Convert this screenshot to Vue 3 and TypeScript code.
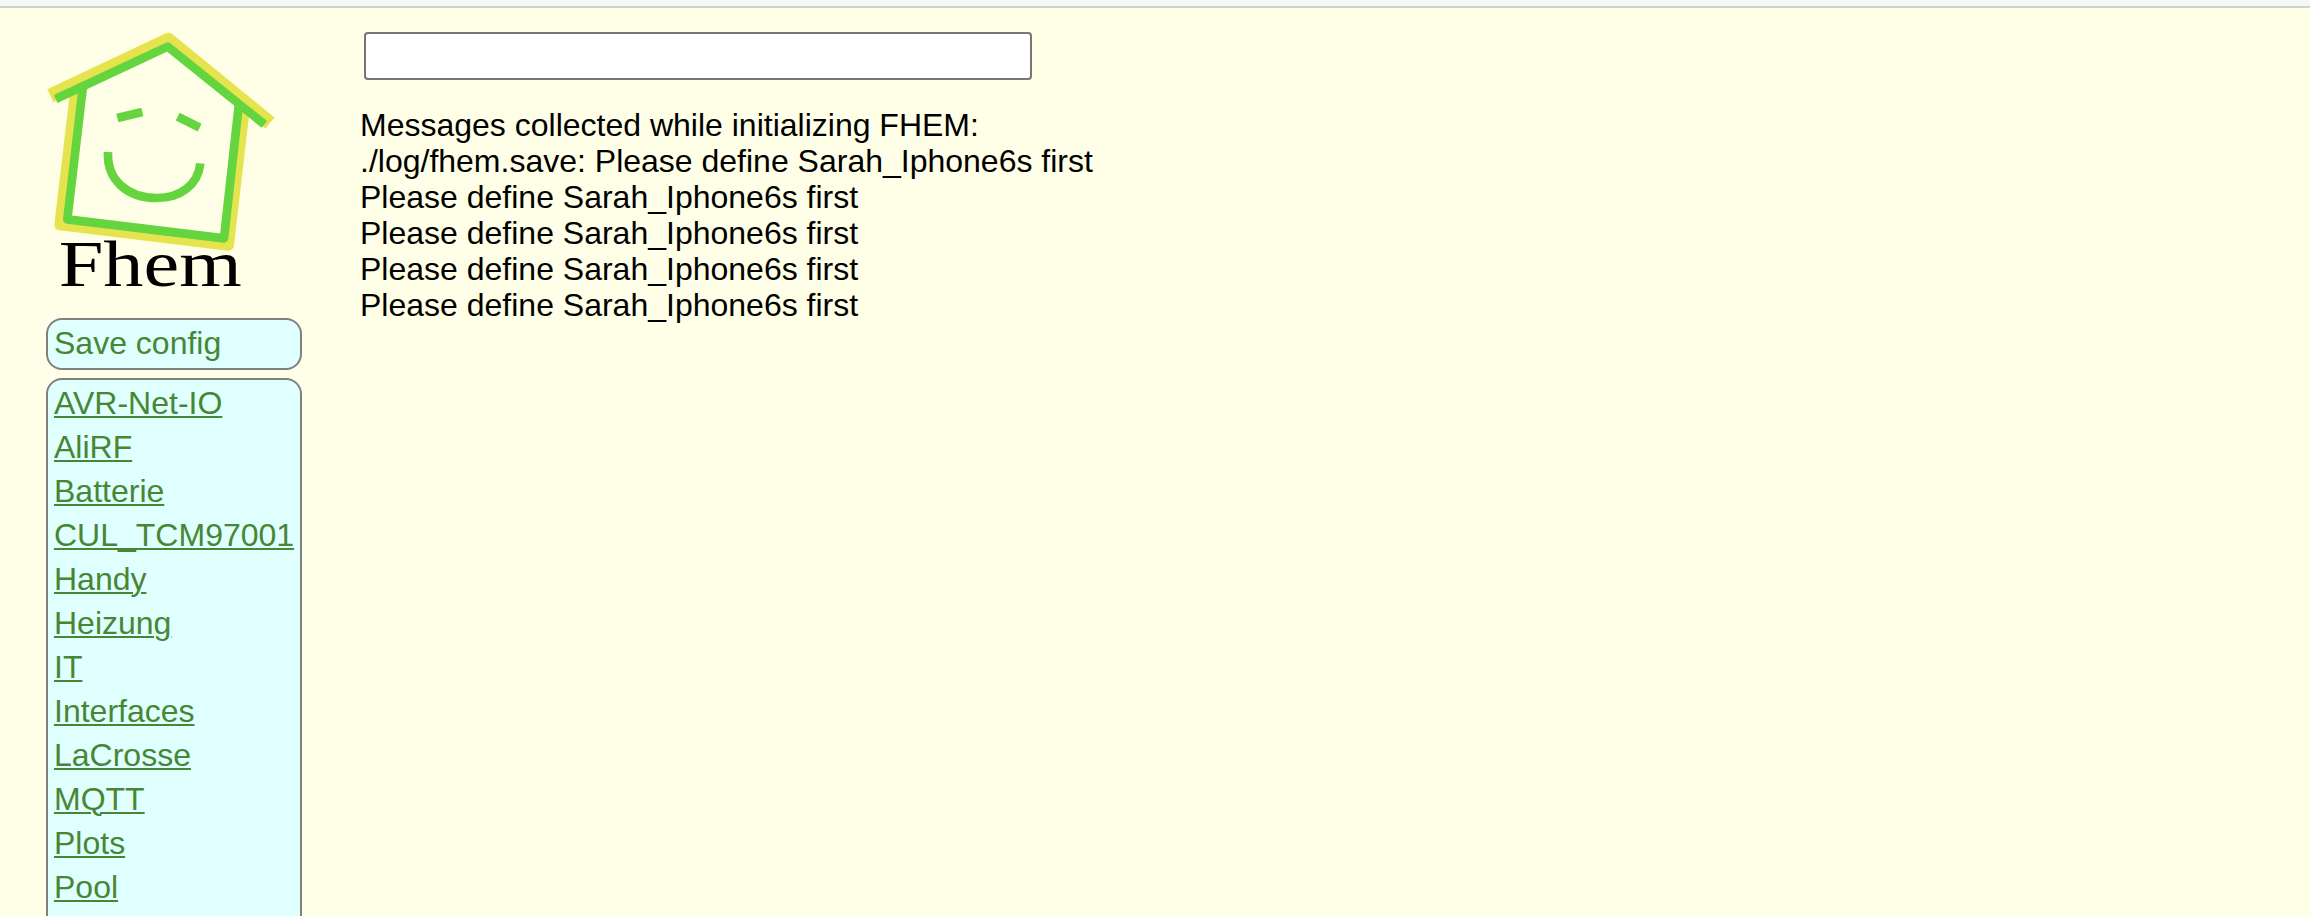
<script setup lang="ts">
import { ref } from 'vue'

const command = ref<string>('')

const rooms: string[] = [
  'AVR-Net-IO',
  'AliRF',
  'Batterie',
  'CUL_TCM97001',
  'Handy',
  'Heizung',
  'IT',
  'Interfaces',
  'LaCrosse',
  'MQTT',
  'Plots',
  'Pool',
]

const messages: string[] = [
  'Messages collected while initializing FHEM:',
  './log/fhem.save: Please define Sarah_Iphone6s first',
  'Please define Sarah_Iphone6s first',
  'Please define Sarah_Iphone6s first',
  'Please define Sarah_Iphone6s first',
  'Please define Sarah_Iphone6s first',
]
</script>

<template>
  <div class="page">
    <div class="topbar"></div>
    <div class="layout">
      <aside class="sidebar">
        <svg class="logo" viewBox="48 24 768 930" role="img" aria-label="Fhem">
          <g fill="none" stroke-linejoin="round">
            <g stroke="#e6e44e">
              <path d="M139 260L90 674L595 735L642 330" stroke-width="34" />
              <path d="M61 287L415 120L720 369" stroke-width="43" />
            </g>
            <g stroke="#64d43f" stroke-width="26">
              <path d="M159 258L112 658L582 715L627 310" />
              <path d="M77 297L413 140L703 373" />
              <path d="M262 354L337 336M443 350L509 383" />
              <path d="M234 456C230 540 292 594 380 594C450 594 504 556 511 490" />
            </g>
          </g>
          <text x="86" y="857" textLength="549" lengthAdjust="spacingAndGlyphs">Fhem</text>
        </svg>
        <div class="box">
          <a class="entry">Save config</a>
        </div>
        <nav class="box rooms">
          <a v-for="room in rooms" :key="room" class="entry link">{{ room }}</a>
        </nav>
      </aside>
      <main class="content">
        <input v-model="command" class="command" type="text" />
        <div class="messages">
          <div v-for="(message, i) in messages" :key="i">{{ message }}</div>
        </div>
      </main>
    </div>
  </div>
</template>

<style>
body {
  margin: 0;
  background: #ffffe7;
}
</style>

<style scoped>
.page {
  box-sizing: border-box;
  height: 916px;
  overflow: hidden;
  background: #ffffe7;
  color: #000;
  font-family: Arial, 'Liberation Sans', sans-serif;
  font-size: 32px;
  line-height: 36px;
}

.topbar {
  box-sizing: border-box;
  height: 8px;
  background: #f5f8f5;
  border-bottom: 2px solid #cfd4cb;
}

.layout {
  display: flex;
  align-items: flex-start;
  gap: 58px;
  padding-left: 46px;
}

.sidebar {
  display: flex;
  flex-direction: column;
  width: 256px;
}

.logo {
  display: block;
  width: 256px;
  height: 310px;
  filter: blur(0.5px);
}

.logo text {
  font-family: 'Liberation Serif', 'Times New Roman', serif;
  font-size: 197px;
  fill: #000;
}

.box {
  box-sizing: border-box;
  width: 256px;
  height: 52px;
  padding: 1px 6px;
  background: #e0ffff;
  border: 2px solid #808080;
  border-radius: 16px;
}

.rooms {
  height: 640px;
  margin-top: 8px;
}

.entry {
  display: block;
  height: 44px;
  line-height: 44px;
  color: #478733;
  white-space: nowrap;
}

.link {
  text-decoration: underline;
  text-decoration-thickness: 2px;
  text-underline-offset: 2px;
}

.content {
  padding-top: 24px;
}

.command {
  display: block;
  box-sizing: border-box;
  width: 668px;
  height: 48px;
  margin: 0 0 27px 4px;
  padding: 2px 4px;
  background: #fff;
  border: 2px solid #767676;
  border-radius: 4px;
  font: inherit;
  outline: none;
}

.messages {
  white-space: nowrap;
}
</style>
